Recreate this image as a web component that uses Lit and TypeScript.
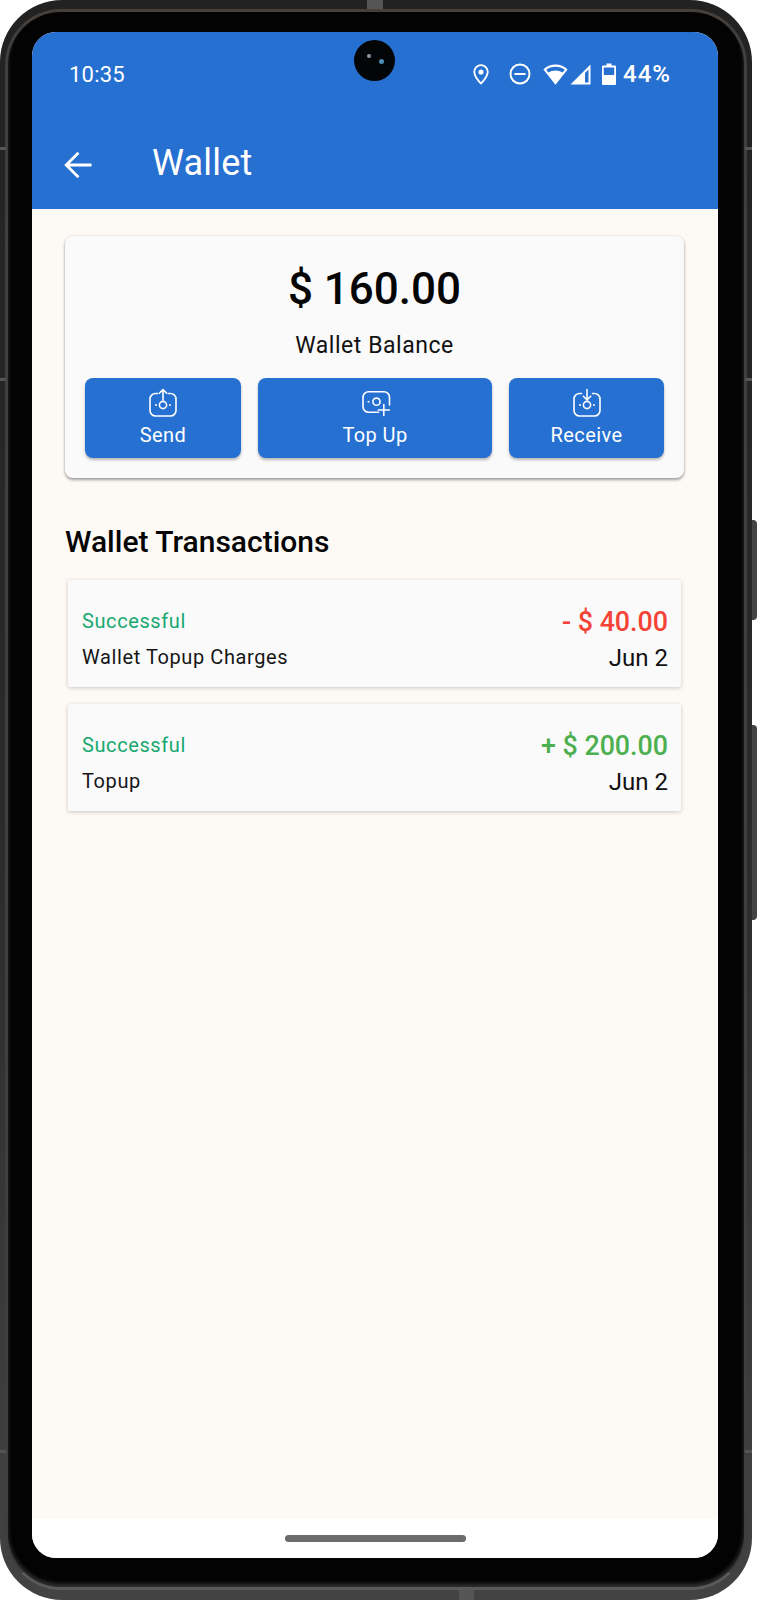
// app.ts - Wallet screen inside a phone frame
import { LitElement, css, html, svg } from "lit";
import { customElement } from "lit/decorators.js";

const sendIcon = svg`
  <path d="M8.500 5.500H6.500a5.500 5.500 0 0 0-5.500 5.500v11.500a5.500 5.500 0 0 0 5.500 5.500h15a5.500 5.500 0 0 0 5.500-5.500V11a5.500 5.500 0 0 0-5.500-5.500h-2" />
  <path d="M14 12V2M10.300 5.300 14 1.600l3.700 3.700" />
  <circle cx="14" cy="17" r="3.600" />
  <circle class="dot" cx="7" cy="17" r="1" />
  <circle class="dot" cx="21" cy="17" r="1" />
`;

const topUpIcon = svg`
  <path d="M17.500 24.300H7.500a5.500 5.500 0 0 1-5.500-5.500V9.200a5.500 5.500 0 0 1 5.500-5.500H23a5.500 5.500 0 0 1 5.500 5.500V17" />
  <circle cx="15.500" cy="13.700" r="3.600" />
  <circle class="dot" cx="7.500" cy="13.700" r="1" />
  <path d="M22.800 16.500v11M17.300 22h11" />
`;

const receiveIcon = svg`
  <path d="M8.500 5.500H6.500a5.500 5.500 0 0 0-5.500 5.500v11.500a5.500 5.500 0 0 0 5.500 5.500h15a5.500 5.500 0 0 0 5.500-5.500V11a5.500 5.500 0 0 0-5.500-5.500h-2" />
  <path d="M14 1.500V11.500M10.300 8.200 14 11.900l3.700-3.700" />
  <circle cx="14" cy="17" r="3.600" />
  <circle class="dot" cx="7" cy="17" r="1" />
  <circle class="dot" cx="21" cy="17" r="1" />
`;

const actions = [
  { label: "Send", icon: sendIcon },
  { label: "Top Up", icon: topUpIcon },
  { label: "Receive", icon: receiveIcon },
];

const transactions = [
  { name: "Wallet Topup Charges", amount: "- $ 40.00", date: "Jun 2", kind: "debit" },
  { name: "Topup", amount: "+ $ 200.00", date: "Jun 2", kind: "credit" },
];

@customElement("app-root")
export class AppRoot extends LitElement {
  static styles = css`
    :host {
      display: block;
      width: 757px;
      height: 1600px;
      background: #fff;
      font-family: Roboto, "Liberation Sans", sans-serif;
    }

    .phone {
      position: relative;
      width: 757px;
      height: 1600px;
      box-sizing: border-box;
    }

    .shell {
      width: 752px;
      height: 1600px;
      box-sizing: border-box;
      padding: 9px 5px 10px;
      border-radius: 62px;
      background: linear-gradient(180deg, #222 0%, #2a2a2a 50%, #434343 100%);
    }

    .bezel {
      height: 100%;
      box-sizing: border-box;
      padding: 20px 24px 29px 24px;
      border: 3px solid #3f3f3f;
      border-top-color: #45403b;
      border-bottom-color: #5a5a5a;
      border-radius: 56px;
      background: #030303;
      box-shadow: inset 0 -3px 4px #333;
    }

    .screen {
      display: flex;
      flex-direction: column;
      width: 686px;
      height: 1526px;
      overflow: hidden;
      border-radius: 24px;
      background: #fff;
    }

    /* hardware bits on top of the frame */
    .side-btn {
      position: absolute;
      right: 0;
      width: 5px;
      background: #444;
      border-radius: 0 4px 4px 0;
    }
    .side-btn.power { top: 520px; height: 100px; }
    .side-btn.volume { top: 725px; height: 195px; }

    .band {
      position: absolute;
      background: #555;
    }
    .band.b-top { left: 367px; top: 0; width: 16px; height: 9px; }
    .band.b-bottom { left: 459px; bottom: 0; width: 15px; height: 10px; }
    .band.l1, .band.l2, .band.l3 { left: 0; width: 6px; height: 3px; }
    .band.r1, .band.r2, .band.r3 { left: 745px; width: 7px; height: 3px; }
    .band.l1, .band.r1 { top: 147px; }
    .band.l2, .band.r2 { top: 378px; }
    .band.l3, .band.r3 { top: 1450px; }

    .camera {
      position: absolute;
      left: 354px;
      top: 40px;
      width: 41px;
      height: 41px;
      border-radius: 50%;
      background: #040507;
    }
    .camera i {
      position: absolute;
      border-radius: 50%;
    }
    .camera .lens-a {
      left: 13px;
      top: 14px;
      width: 4px;
      height: 4px;
      background: #8d99a6;
    }
    .camera .lens-b {
      left: 25px;
      top: 19px;
      width: 5px;
      height: 5px;
      background: #4f8fb5;
    }

    .header {
      flex: none;
      height: 177px;
      background: #2670d2;
      color: #fff;
    }

    .status {
      display: flex;
      align-items: center;
      justify-content: space-between;
      height: 84px;
      padding: 0 47px 0 37px;
    }
    .time {
      font-size: 22px;
      letter-spacing: 0.2px;
    }
    .status-icons {
      display: flex;
      align-items: center;
    }
    .status-icons svg {
      display: block;
      fill: #fff;
    }
    .status-icons .pin { margin-right: 20px; }
    .status-icons .dnd { margin-right: 12px; }
    .status-icons .wifi { margin-right: 2px; }
    .status-icons .signal { margin-right: 11px; }
    .status-icons .battery { margin-right: 7px; }
    .pct {
      font-size: 24px;
      font-weight: 500;
      letter-spacing: 1px;
    }

    .appbar {
      display: flex;
      align-items: center;
      height: 93px;
      padding: 30px 0 26px 32px;
      box-sizing: border-box;
    }
    .appbar svg {
      display: block;
      margin-right: 60px;
      fill: none;
      stroke: #fff;
      stroke-width: 2.800;
    }
    .appbar h1 {
      margin: 0 0 4px;
      font-size: 36px;
      font-weight: 400;
      letter-spacing: 0.2px;
    }

    .content {
      flex: 1;
      padding: 27px 34px 0 33px;
      background: #fdfaf5;
    }

    .balance {
      height: 242px;
      box-sizing: border-box;
      padding: 0 20px;
      border-radius: 8px;
      background: #fafafa;
      box-shadow: 0 2px 3px rgba(0, 0, 0, 0.35), 0 0 3px rgba(0, 0, 0, 0.1);
      text-align: center;
    }
    .amount {
      padding-top: 25px;
      font-size: 44px;
      line-height: 56px;
      font-weight: 500;
      color: #050505;
    }
    .label {
      padding-top: 16px;
      font-size: 23px;
      line-height: 26px;
      letter-spacing: 0.55px;
      color: #111;
    }

    .actions {
      display: grid;
      grid-template-columns: 156px 1fr 155px;
      gap: 17px;
      margin-top: 19px;
    }
    .action {
      display: flex;
      flex-direction: column;
      align-items: center;
      height: 80px;
      box-sizing: border-box;
      padding-top: 10px;
      border-radius: 8px;
      background: #2670d2;
      box-shadow: 0 2px 3px rgba(0, 0, 0, 0.28);
      color: #fff;
      font-size: 20px;
      letter-spacing: 0.4px;
    }
    .action svg {
      display: block;
      flex: none;
      overflow: visible;
      fill: none;
      stroke: #fff;
      stroke-width: 1.600;
      stroke-linecap: round;
      stroke-linejoin: round;
    }
    .action svg .dot {
      fill: #fff;
      stroke: none;
    }
    .action span {
      line-height: 24px;
      margin-top: 5px;
    }

    h2 {
      margin: 42px 0 0;
      font-size: 30px;
      line-height: 44px;
      font-weight: 500;
      color: #050505;
    }

    .list {
      display: flex;
      flex-direction: column;
      gap: 17px;
      margin: 16px 3px 0;
    }
    .txn {
      display: flex;
      flex-direction: column;
      gap: 7px;
      height: 107px;
      box-sizing: border-box;
      padding: 28px 13px 0 14px;
      border-radius: 2px;
      background: #fafafa;
      box-shadow: 0 1px 4px rgba(0, 0, 0, 0.2);
    }
    .row {
      display: flex;
      align-items: center;
      justify-content: space-between;
      height: 28px;
    }
    .state {
      margin-bottom: 2px;
      font-size: 20px;
      letter-spacing: 0.6px;
      color: #17a870;
    }
    .name {
      font-size: 20px;
      letter-spacing: 0.6px;
      color: #161616;
    }
    .sum {
      font-size: 26.800px;
      font-weight: 500;
    }
    .sum.debit { color: #f44336; }
    .sum.credit { color: #4caf50; }
    .date {
      font-size: 24px;
      color: #111;
      margin-top: 1px;
    }

    .home {
      display: flex;
      flex: none;
      align-items: center;
      justify-content: center;
      height: 39px;
      background: #fff;
    }
    .home i {
      width: 181px;
      height: 7px;
      border-radius: 4px;
      background: #6b6b6b;
    }
  `;

  render() {
    return html`
      <div class="phone">
        <div class="shell">
          <div class="bezel">
            <div class="screen">
              <div class="header">
                <div class="status">
                  <span class="time">10:35</span>
                  <div class="status-icons">
                    <svg class="pin" width="16" height="21" viewBox="0 0 16 21">
                      <path fill-rule="evenodd" d="M8 0.200a7.600 7.600 0 0 0-7.600 7.600c0 4.400 3.600 9 7.600 13 4-4 7.600-8.600 7.600-13A7.600 7.600 0 0 0 8 0.200Zm0 1.800a5.800 5.800 0 0 1 5.800 5.800c0 3.200-2.500 6.800-5.800 10.400C4.700 14.600 2.200 11 2.200 7.800A5.800 5.800 0 0 1 8 2Z" />
                      <circle cx="8" cy="8" r="2.600" />
                    </svg>
                    <svg class="dnd" width="22" height="22" viewBox="0 0 22 22">
                      <path fill-rule="evenodd" d="M11 0.500a10.500 10.500 0 1 0 0 21 10.500 10.500 0 0 0 0-21Zm0 2a8.500 8.500 0 1 1 0 17 8.500 8.500 0 0 1 0-17Z" />
                      <rect x="5.500" y="10" width="11" height="2" />
                    </svg>
                    <svg class="wifi" width="25" height="21" viewBox="0 0 25 21">
                      <path fill-rule="evenodd" d="M12.500 0.500C7.800 0.500 3.600 2.300 0.400 5.400L12.500 20.800 24.600 5.400C21.400 2.300 17.200 0.500 12.500 0.500Zm0 2.200c3.500 0 6.800 1.100 9.300 3l-2.200 2.800c-2-1.300-4.500-2.100-7.100-2.100s-5.100 0.800-7.100 2.100L3.200 5.700c2.500-1.900 5.800-3 9.300-3Z" />
                    </svg>
                    <svg class="signal" width="21" height="21" viewBox="0 0 21 21">
                      <path fill-rule="evenodd" d="M20.500 0.500 0.500 20.500h20V0.500Zm-2 5v13h-3.500V9Z" />
                    </svg>
                    <svg class="battery" width="14" height="22" viewBox="0 0 14 22">
                      <path fill-rule="evenodd" d="M4.500 0.500h5v2H13a1 1 0 0 1 1 1V21a1 1 0 0 1-1 1H1a1 1 0 0 1-1-1V3.500a1 1 0 0 1 1-1h3.500Zm-2.700 4v7.500h10.400V4.500Z" />
                    </svg>
                    <span class="pct">44%</span>
                  </div>
                </div>
                <div class="appbar">
                  <svg width="28" height="28" viewBox="0 0 28 28">
                    <path d="M27.500 14H3M14.500 1.800 2.200 14l12.300 12.200" />
                  </svg>
                  <h1>Wallet</h1>
                </div>
              </div>

              <div class="content">
                <div class="balance">
                  <div class="amount">$ 160.00</div>
                  <div class="label">Wallet Balance</div>
                  <div class="actions">
                    ${actions.map(
                      (a) => html`
                        <div class="action">
                          <svg width="28" height="30" viewBox="0 0 28 30">${a.icon}</svg>
                          <span>${a.label}</span>
                        </div>
                      `
                    )}
                  </div>
                </div>

                <h2>Wallet Transactions</h2>

                <div class="list">
                  ${transactions.map(
                    (t) => html`
                      <div class="txn">
                        <div class="row">
                          <span class="state">Successful</span>
                          <span class="sum ${t.kind}">${t.amount}</span>
                        </div>
                        <div class="row">
                          <span class="name">${t.name}</span>
                          <span class="date">${t.date}</span>
                        </div>
                      </div>
                    `
                  )}
                </div>
              </div>

              <div class="home"><i></i></div>
            </div>
          </div>
        </div>

        <div class="camera"><i class="lens-a"></i><i class="lens-b"></i></div>
        <div class="side-btn power"></div>
        <div class="side-btn volume"></div>
        <div class="band b-top"></div>
        <div class="band b-bottom"></div>
        <div class="band l1"></div>
        <div class="band l2"></div>
        <div class="band l3"></div>
        <div class="band r1"></div>
        <div class="band r2"></div>
        <div class="band r3"></div>
      </div>
    `;
  }
}

declare global {
  interface HTMLElementTagNameMap {
    "app-root": AppRoot;
  }
}
